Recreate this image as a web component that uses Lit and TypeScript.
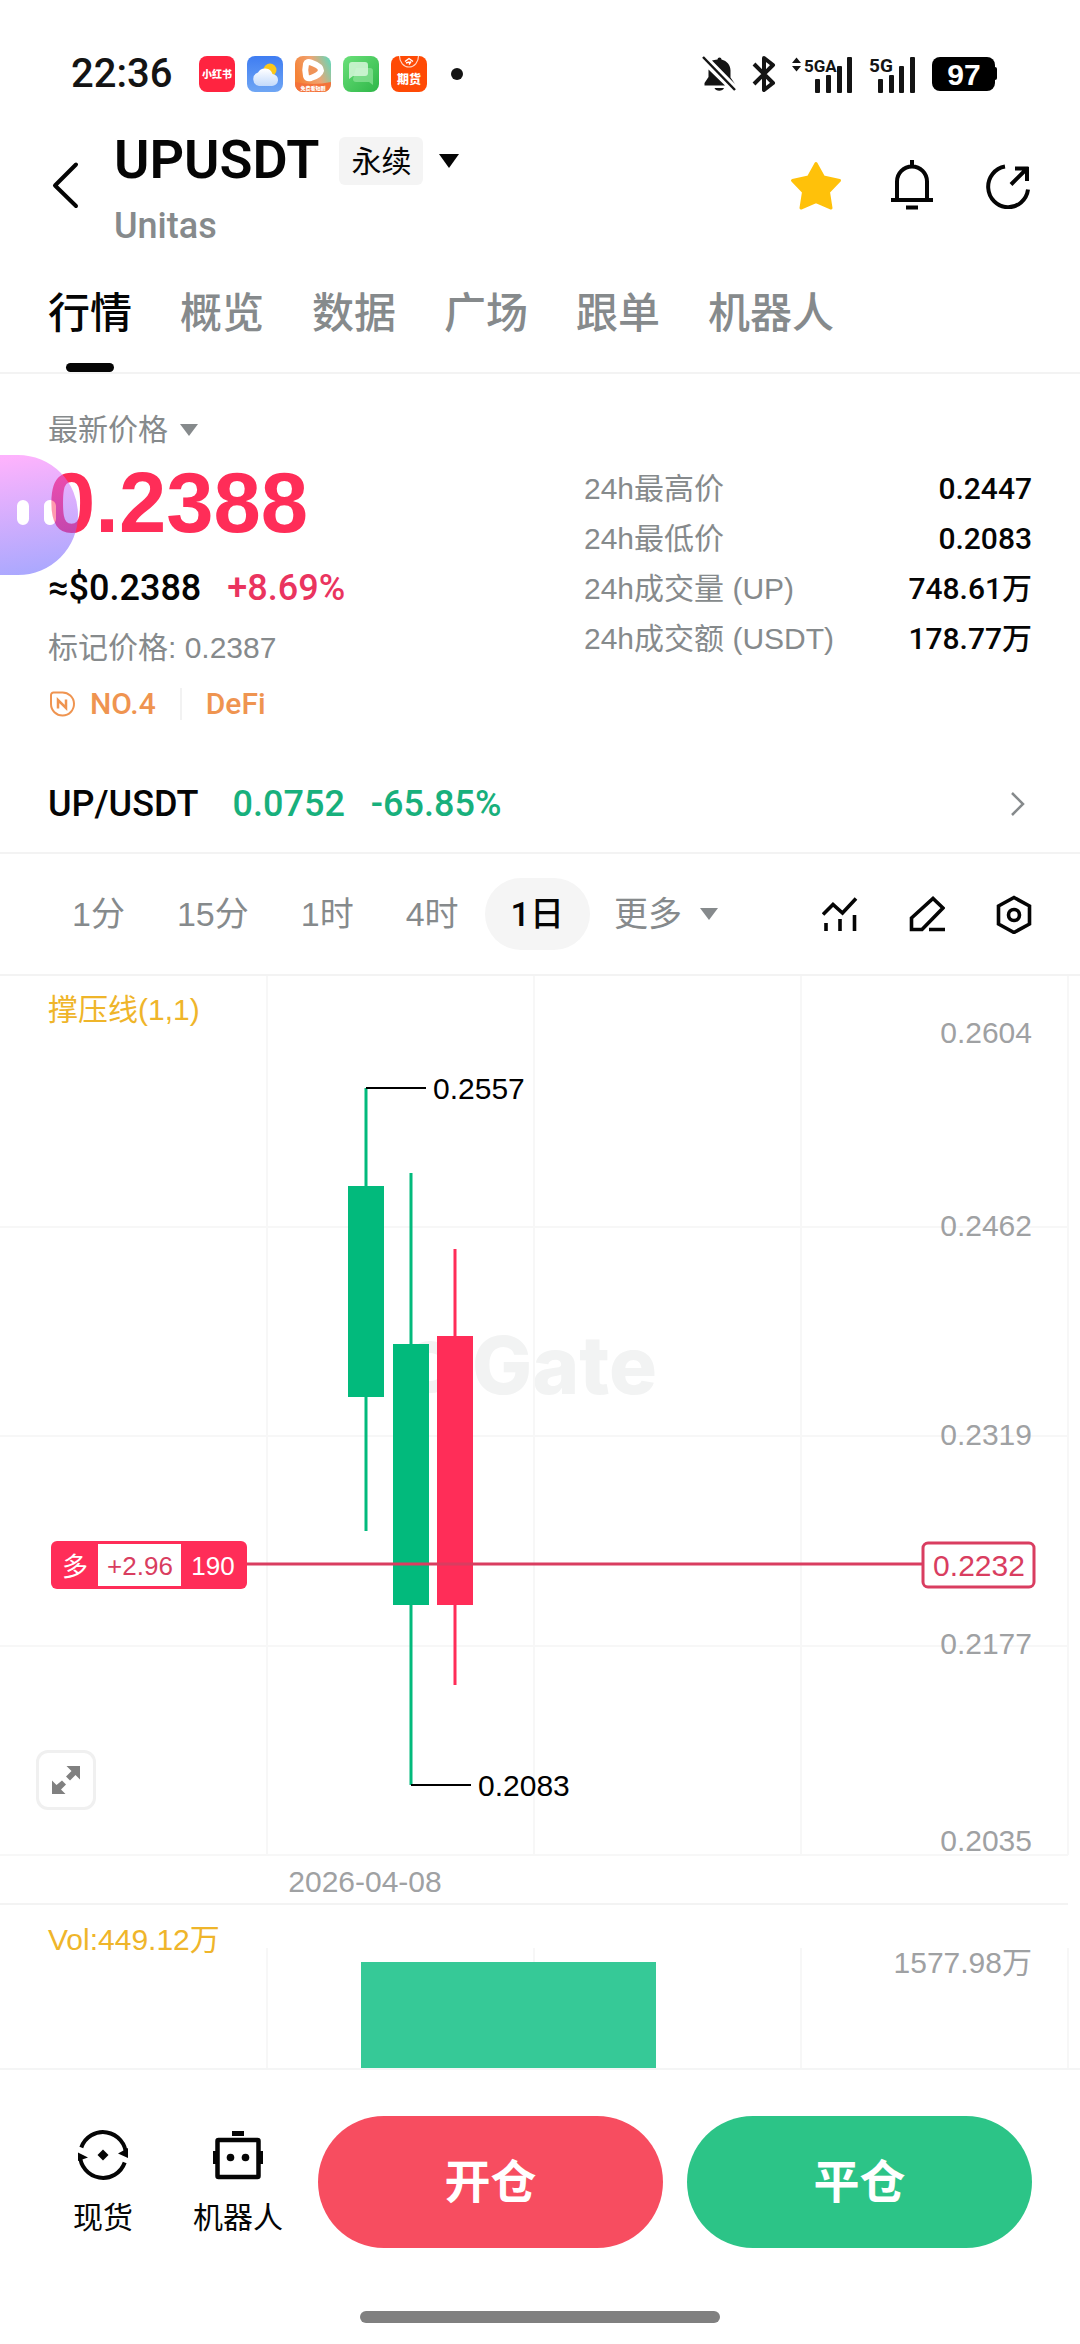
import { LitElement, html, svg, css } from "lit";
import { customElement, state } from "lit/decorators.js";

const TABS = ["行情", "概览", "数据", "广场", "跟单", "机器人"];
const INTERVALS = ["1分", "15分", "1时", "4时", "1日"];
const STATS = [
  ["24h最高价", "0.2447"],
  ["24h最低价", "0.2083"],
  ["24h成交量 (UP)", "748.61万"],
  ["24h成交额 (USDT)", "178.77万"],
];

const UP = "#02ba7c";
const DOWN = "#ff2d58";

interface Candle {
  x: number;
  high: number;
  top: number;
  bottom: number;
  low: number;
  color: string;
}

// Candle geometry in chart units.
const CANDLES: Candle[] = [
  { x: 366, high: 112, top: 210, bottom: 421, low: 555, color: UP },
  { x: 411, high: 197, top: 368, bottom: 629, low: 809, color: UP },
  { x: 455, high: 273, top: 360, bottom: 629, low: 709, color: DOWN },
];
const GRID_X = [267, 534, 801, 1068];
const GRID_Y = [251, 460, 670, 879];
const AXIS: [string, number][] = [
  ["0.2604", 67],
  ["0.2462", 260],
  ["0.2319", 469],
  ["0.2177", 678],
  ["0.2035", 875],
];

@customElement("status-bar")
export class StatusBar extends LitElement {
  static styles = css`
    :host {
      display: flex;
      align-items: center;
      justify-content: space-between;
      padding: 48px 83px 0 71px;
      height: 52px;
      color: #141414;
    }
    .group {
      display: flex;
      align-items: center;
    }
    .time {
      font: 500 40px/52px Roboto, sans-serif;
      margin-right: 27px;
    }
    .apps {
      display: flex;
      gap: 12px;
    }
    .dot {
      width: 12px;
      height: 12px;
      border-radius: 50%;
      background: #141414;
      margin-left: 24px;
    }
    .right {
      gap: 16px;
    }
    svg {
      display: block;
    }
    .battery {
      font: 700 30px "Liberation Sans", sans-serif;
    }
    .tiny {
      font-family: "Noto Sans CJK SC", sans-serif;
      font-weight: 900;
    }
    .net {
      font-family: "Liberation Sans Narrow", Roboto, sans-serif;
      font-weight: 700;
    }
  `;

  render() {
    return html`
      <div class="group">
        <span class="time">22:36</span>
        <div class="apps">
          <svg width="36" height="36" viewBox="0 0 36 36">
            <rect width="36" height="36" rx="8" fill="#ff2440" />
            <text class="tiny" x="18" y="22" font-size="10" fill="#fff" text-anchor="middle">小红书</text>
          </svg>
          <svg width="36" height="36" viewBox="0 0 36 36">
            <defs>
              <linearGradient id="sky" x1="0" y1="0" x2="0" y2="1">
                <stop offset="0" stop-color="#3f7df2" />
                <stop offset="1" stop-color="#6fa6f4" />
              </linearGradient>
              <linearGradient id="cloud" x1="0" y1="0" x2="0" y2="1">
                <stop offset="0" stop-color="#fff" />
                <stop offset="1" stop-color="#c3dafb" />
              </linearGradient>
            </defs>
            <rect width="36" height="36" rx="8" fill="url(#sky)" />
            <circle cx="23" cy="14" r="6.5" fill="#fcc818" />
            <path d="M12 30a7 7 0 0 1-1-13.500a8 8 0 0 1 14.500 1.500a6 6 0 0 1-1 12z" fill="url(#cloud)" />
          </svg>
          <svg width="36" height="36" viewBox="0 0 36 36">
            <defs>
              <linearGradient id="play" x1="0" y1="0.4" x2="1" y2="0">
                <stop offset="0" stop-color="#f58338" />
                <stop offset="0.5" stop-color="#f0a472" />
                <stop offset="1" stop-color="#55dcc0" />
              </linearGradient>
            </defs>
            <rect width="36" height="36" rx="8" fill="url(#play)" />
            <path d="M0 26Q18 30 36 26V28a8 8 0 0 1-8 8H8a8 8 0 0 1-8-8z" fill="#f4723a" />
            <path
              d="M11 8Q12 5 16 6.500Q26 10 26 14.500Q25 19 16 22Q12 23 11 20Q9.500 14 11 8z"
              fill="#ef9358"
              stroke="#fff"
              stroke-width="6"
            />
            <text class="tiny" x="18" y="34" font-size="5" fill="#fff" text-anchor="middle">免费看短剧</text>
          </svg>
          <svg width="36" height="36" viewBox="0 0 36 36">
            <defs>
              <linearGradient id="chat" x1="0" y1="0" x2="1" y2="1">
                <stop offset="0" stop-color="#6ae079" />
                <stop offset="1" stop-color="#2eb648" />
              </linearGradient>
            </defs>
            <rect width="36" height="36" rx="8" fill="url(#chat)" />
            <path d="M13 12h14a3 3 0 0 1 3 3v14l-4-3H13a3 3 0 0 1-3-3z" fill="#8ee49a" opacity="0.7" />
            <path d="M9 6h13a3 3 0 0 1 3 3v8a3 3 0 0 1-3 3H10l-4 3V9a3 3 0 0 1 3-3z" fill="#d6f7d9" opacity="0.85" />
          </svg>
          <svg width="36" height="36" viewBox="0 0 36 36">
            <rect width="36" height="36" rx="8" fill="#ff4a05" />
            <path d="M8.500 0a9.500 11 0 0 0 19 0" fill="none" stroke="#ffd5c4" stroke-width="1.200" />
            <path d="M14 5.500l4-3 4 3M15 7l3-1 1 2M18 8.500l2-3" fill="none" stroke="#fff" stroke-width="1.400" />
            <text class="tiny" x="18" y="28" font-size="12" fill="#fff" text-anchor="middle">期货</text>
          </svg>
        </div>
        <span class="dot"></span>
      </div>
      <div class="group right">
        <svg width="34" height="36" viewBox="0 0 34 36" fill="#141414">
          <path d="M17.500 1.500a2 2 0 0 1 2 2c5.500 1.500 9 5.500 9 11v7l4.500 6.500L10 4.500C11.500 4 13 3.700 15.500 3.500a2 2 0 0 1 2-2z" />
          <path d="M6.500 13.500L23 29.500H2.500v-2.500l4-6z" />
          <path d="M12.500 32h9.500a5 4 0 0 1-9.500 0z" />
          <path d="M1 1L33 34" stroke="#141414" stroke-width="2.500" />
        </svg>
        <svg width="24" height="36" viewBox="0 0 24 36" fill="none" stroke="#141414" stroke-width="4" stroke-linejoin="round">
          <path d="M2 8L21 27L12 34V2L21 9L2 28" />
        </svg>
        <svg width="61" height="42" viewBox="0 -4 61 42" fill="#141414">
          <path d="M0 6l4.500-5.500L9 6zM0 9h9l-4.500 5.500z" />
          <text class="net" x="12" y="15" font-size="17">5GA</text>
          <rect x="23" y="22" width="5" height="14" rx="1" />
          <rect x="34" y="18" width="5" height="18" rx="1" />
          <rect x="45" y="9" width="5" height="27" rx="1" />
          <rect x="55" y="0" width="5" height="36" rx="1" />
        </svg>
        <svg width="47" height="42" viewBox="0 -4 47 42" fill="#141414">
          <text class="net" x="0" y="15" font-size="19">5G</text>
          <rect x="9" y="22" width="5" height="14" rx="1" />
          <rect x="20" y="18" width="5" height="18" rx="1" />
          <rect x="30" y="9" width="5" height="27" rx="1" />
          <rect x="41" y="0" width="5" height="36" rx="1" />
        </svg>
        <svg width="65" height="34" viewBox="0 0 65 34">
          <rect width="63" height="34" rx="8" />
          <rect x="60" y="10" width="5" height="13" rx="2" />
          <text class="battery" x="32" y="28" fill="#fff" text-anchor="middle">97</text>
        </svg>
      </div>
    `;
  }
}

@customElement("price-chart")
export class PriceChart extends LitElement {
  static styles = css`
    :host {
      display: block;
      position: relative;
    }
    svg {
      display: block;
      width: 100%;
      height: auto;
    }
    .label {
      font: 400 30px "Liberation Sans", "Noto Sans CJK SC", sans-serif;
    }
    .small {
      font: 400 26px "Liberation Sans", "Noto Sans CJK SC", sans-serif;
    }
    .mark {
      font: 800 80px Inter, sans-serif;
    }
    .expand {
      position: absolute;
      left: 36px;
      bottom: 95px;
      width: 60px;
      height: 60px;
      padding: 0;
      border: 3px solid #f0f0f0;
      border-radius: 12px;
      background: #fff;
      display: grid;
      place-items: center;
    }
    .expand svg {
      width: 28px;
      height: 28px;
    }
  `;

  render() {
    return html`
      <svg viewBox="0 0 1080 929" role="img" aria-label="UPUSDT 1日 K线">
        <g fill="#f2f3f3">
          <circle cx="430" cy="391" r="20" fill="none" stroke="#f2f3f3" stroke-width="12" />
          <text class="mark" x="472" y="418">Gate</text>
        </g>
        <g stroke="#f7f7f7" stroke-width="2">
          ${GRID_X.map((x) => svg`<line x1=${x} y1="0" x2=${x} y2="879" />`)}
          ${GRID_Y.map((y) => svg`<line x1="0" y1=${y} x2="1068" y2=${y} />`)}
          <line x1="0" y1="928" x2="1068" y2="928" stroke="#f3f3f3" />
        </g>
        ${CANDLES.map(
          (c) => svg`
            <line x1=${c.x} y1=${c.high} x2=${c.x} y2=${c.low} stroke=${c.color} stroke-width="3" />
            <rect x=${c.x - 18} y=${c.top} width="36" height=${c.bottom - c.top} fill=${c.color} />`
        )}
        <g stroke="#000" stroke-width="2">
          <line x1="366" y1="112" x2="426" y2="112" />
          <line x1="411" y1="809" x2="471" y2="809" />
        </g>
        <text class="label" x="433" y="123">0.2557</text>
        <text class="label" x="478" y="820">0.2083</text>
        <g fill="#9fa1a3">
          ${AXIS.map(([t, y]) => svg`<text class="label" x="1032" y=${y} text-anchor="end">${t}</text>`)}
          <text class="label" x="365" y="916" text-anchor="middle">2026-04-08</text>
        </g>
        <text class="label" x="48" y="44" fill="#efb52a">撑压线(1,1)</text>

        <line x1="247" y1="588" x2="922" y2="588" stroke="#d93d60" stroke-width="3" />
        <rect x="51" y="565" width="196" height="48" rx="6" fill="#ff2d58" />
        <rect x="98" y="568" width="83" height="42" fill="#fff" />
        <text class="small" x="75" y="600" fill="#fff" text-anchor="middle">多</text>
        <text class="small" x="140" y="599" fill="#d93d60" text-anchor="middle">+2.96</text>
        <text class="small" x="213" y="599" fill="#fff" text-anchor="middle">190</text>
        <rect x="923" y="567" width="111" height="44" rx="5" fill="#fff" stroke="#d93d60" stroke-width="3" />
        <text class="label" x="979" y="600" fill="#d93d60" text-anchor="middle">0.2232</text>
      </svg>
      <button class="expand" aria-label="全屏">
        <svg viewBox="0 0 28 28" fill="#808080">
          <path d="M14.500 0H28v13.500l-4.500-4.500-5.500 5.500-4-4 5.500-5.500z" />
          <path d="M0 14.500l4.500 4.500 5.500-4.500 4 4-5 5 4.500 4.500H0z" />
        </svg>
      </button>
    `;
  }
}

@customElement("volume-chart")
export class VolumeChart extends LitElement {
  static styles = css`
    :host {
      display: block;
      border-bottom: 2px solid #f4f5f5;
    }
    svg {
      display: block;
      width: 100%;
      height: auto;
    }
    .label {
      font: 400 30px "Liberation Sans", "Noto Sans CJK SC", sans-serif;
    }
  `;

  render() {
    return html`
      <svg viewBox="0 0 1080 163" role="img" aria-label="成交量">
        <g stroke="#f7f7f7" stroke-width="2">
          ${GRID_X.map((x) => svg`<line x1=${x} y1="43" x2=${x} y2="163" />`)}
        </g>
        <rect x="361" y="57" width="295" height="106" fill="#36c997" />
        <text class="label" x="48" y="45" fill="#efb52a">Vol:449.12万</text>
        <text class="label" x="1032" y="68" fill="#9fa1a3" text-anchor="end">1577.98万</text>
      </svg>
    `;
  }
}

@customElement("app-root")
export class AppRoot extends LitElement {
  @state() private tab = "行情";
  @state() private interval = "1日";

  static styles = css`
    :host {
      display: block;
      position: relative;
      background: #fff;
      color: #050505;
      font: 400 30px/40px "Liberation Sans", "Noto Sans CJK SC", sans-serif;
    }
    button {
      border: 0;
      margin: 0;
      padding: 0;
      background: none;
      color: inherit;
      font: inherit;
      cursor: pointer;
    }
    a {
      color: inherit;
      text-decoration: none;
    }
    svg {
      display: block;
    }
    .medium {
      font-family: Roboto, "Noto Sans CJK SC", sans-serif;
      font-weight: 500;
    }
    .gray {
      color: #868a8c;
    }
    .header {
      display: flex;
      align-items: center;
      margin-top: 24px;
      padding: 0 48px;
      height: 122px;
    }
    .names {
      flex: 1;
      padding: 14px 0 0 32px;
    }
    .title-row {
      display: flex;
      align-items: center;
      height: 48px;
      gap: 16px;
    }
    .title {
      margin: 0;
      font: 600 54px/46px Roboto, sans-serif;
      height: 48px;
    }
    .kind {
      margin-left: 4px;
      padding: 0 12px;
      line-height: 50px;
      height: 48px;
      border-radius: 6px;
      background: #f4f4f4;
    }
    .sub {
      margin: 20px 0 0;
      font-size: 36px;
      line-height: 42px;
    }
    .actions {
      display: flex;
      gap: 48px;
    }
    .tabs {
      display: flex;
      gap: 48px;
      padding: 38px 48px 0;
      border-bottom: 2px solid #f3f3f3;
    }
    .tab {
      display: flex;
      flex-direction: column;
      align-items: center;
      font-size: 42px;
      line-height: 60px;
      font-weight: 500;
      color: #868a8c;
    }
    .tab::after {
      content: "";
      width: 48px;
      height: 9px;
      margin-top: 19px;
      border-radius: 5px;
    }
    .tab.on {
      color: #050505;
    }
    .tab.on::after {
      background: #050505;
    }
    .quote {
      display: grid;
      grid-template-columns: 1fr 448px;
      padding: 36px 48px;
    }
    .pick {
      display: flex;
      align-items: center;
      gap: 12px;
    }
    .price {
      margin-top: 3px;
      font-size: 85px;
      font-weight: 700;
      line-height: 100px;
      color: #ff2d58;
    }
    .usd {
      display: flex;
      gap: 26px;
      margin-top: 13px;
      font-size: 36px;
      line-height: 44px;
    }
    .red {
      color: #ea345f;
    }
    .index {
      margin-top: 18px;
    }
    .tags {
      display: flex;
      align-items: center;
      margin-top: 20px;
      line-height: 32px;
      color: #ef9450;
    }
    .rank {
      padding: 0 24px 0 14px;
      border-right: 2px solid #f2f2f2;
    }
    .sector {
      padding-left: 24px;
    }
    .stats {
      margin: 54px 0 0;
      line-height: 50px;
    }
    .stat {
      display: flex;
      justify-content: space-between;
    }
    .stat dd {
      margin: 0;
    }
    .pair {
      display: flex;
      align-items: center;
      height: 96px;
      padding: 0 48px;
      border-bottom: 2px solid #f3f3f3;
      font-size: 36px;
    }
    .pair-name {
      margin-right: 34px;
    }
    .green {
      color: #18b07c;
      margin-right: 26px;
    }
    .chevron {
      margin-left: auto;
    }
    .toolbar {
      display: flex;
      align-items: center;
      height: 120px;
      padding: 0 48px 0 46px;
      border-bottom: 2px solid #f3f3f3;
      font-size: 34px;
    }
    .interval {
      padding: 0 26px;
      line-height: 72px;
      border-radius: 36px;
      color: #868a8c;
    }
    .interval.on {
      background: #f5f5f5;
      color: #050505;
    }
    .more {
      gap: 18px;
      margin-left: 24px;
    }
    .tools {
      display: flex;
      gap: 51px;
      margin-left: auto;
    }
    .footer {
      display: grid;
      grid-template-columns: 110px 160px 1fr 24px 1fr;
      align-items: center;
      padding: 46px 48px 0;
    }
    .link {
      display: flex;
      flex-direction: column;
      align-items: center;
      gap: 18px;
      font-size: 30px;
      line-height: 36px;
    }
    .trade {
      height: 132px;
      border-radius: 66px;
      color: #fff;
      font-size: 46px;
      font-weight: 700;
    }
    .open {
      background: #f74d60;
    }
    .close {
      grid-column: 5;
      background: #2cc487;
    }
    .home {
      width: 360px;
      height: 12px;
      margin: 63px auto 0;
      border-radius: 6px;
      background: #808080;
    }
    .assistant {
      position: absolute;
      left: 0;
      top: 455px;
    }
  `;

  private caret(color: string, w = 18, h = 12) {
    return html`<svg width=${w} height=${h} viewBox="0 0 18 12" preserveAspectRatio="none">
      <path d="M0 0h18L9 12z" fill=${color} />
    </svg>`;
  }

  render() {
    return html`
      <status-bar></status-bar>
      <header class="header">
        <button aria-label="返回">
          <svg width="34" height="48" viewBox="0 0 34 48" fill="none" stroke="#050505" stroke-width="4" stroke-linecap="round" stroke-linejoin="round">
            <path d="M28 3.500L7 24.500L28 45" />
          </svg>
        </button>
        <div class="names">
          <div class="title-row">
            <h1 class="title">UPUSDT</h1>
            <span class="kind">永续</span>
            <button aria-label="切换合约">${this.caret("#050505", 20, 14)}</button>
          </div>
          <p class="sub gray medium">Unitas</p>
        </div>
        <div class="actions">
          <button aria-label="收藏">
            <svg width="48" height="48" viewBox="0 0 48 48" overflow="visible">
              <path
                d="M24 2.500L31.500 16L47.500 19.500L36.500 31L39 47L24 40.500L9 47L11.500 31L0.500 19.500L16.500 16z"
                fill="#ffc10a"
                stroke="#ffc10a"
                stroke-width="3"
                stroke-linejoin="round"
              />
            </svg>
          </button>
          <button aria-label="提醒">
            <svg width="48" height="50" viewBox="0 0 48 50" fill="none" stroke="#050505" stroke-width="4">
              <path d="M24 0v6M9 39V21.500a15 15 0 0 1 30 0V39M3 40h42M18 47.500h12" />
            </svg>
          </button>
          <button aria-label="分享">
            <svg width="48" height="48" viewBox="0 0 48 48" fill="none" stroke="#050505" stroke-width="4">
              <path d="M21 5.500A20 20.500 0 1 0 44 28.500" />
              <path d="M27 23.500L42 8.500M31 7.500h13.500M43 6v14" />
            </svg>
          </button>
        </div>
      </header>

      <nav class="tabs" role="tablist">
        ${TABS.map(
          (t) => html`<button
            role="tab"
            aria-selected=${t === this.tab}
            class="tab ${t === this.tab ? "on" : ""}"
            @click=${() => (this.tab = t)}
          >${t}</button>`
        )}
      </nav>

      <section class="quote">
        <div>
          <button class="pick gray">最新价格${this.caret("#868a8c")}</button>
          <div class="price">0.2388</div>
          <div class="usd medium"><span>≈$0.2388</span><span class="red">+8.69%</span></div>
          <div class="index gray">标记价格: 0.2387</div>
          <div class="tags">
            <svg width="28" height="28" viewBox="0 0 28 28" fill="none" stroke="#ef9450" stroke-width="2">
              <path d="M3 5a2.500 2.500 0 0 1 2.500-2.500H14A11.500 11.500 0 1 1 3 14z" />
              <path d="M10 18.500V10l8 8V9.500" stroke-width="2.500" />
            </svg>
            <a class="rank medium" href="#rank">NO.4</a>
            <a class="sector medium" href="#defi">DeFi</a>
          </div>
        </div>
        <dl class="stats">
          ${STATS.map(
            ([k, v]) => html`<div class="stat"><dt class="gray">${k}</dt><dd class="medium">${v}</dd></div>`
          )}
        </dl>
      </section>

      <a class="pair" href="#spot-pair">
        <span class="pair-name medium">UP/USDT</span>
        <span class="green medium">0.0752</span>
        <span class="green medium">-65.85%</span>
        <svg class="chevron" width="22" height="26" viewBox="0 0 22 26" fill="none" stroke="#868a8c" stroke-width="2.500">
          <path d="M2 2l11 11L2 24" />
        </svg>
      </a>

      <div class="toolbar">
        ${INTERVALS.map(
          (i) => html`<button
            aria-pressed=${i === this.interval}
            class="interval ${i === this.interval ? "on medium" : ""}"
            @click=${() => (this.interval = i)}
          >${i}</button>`
        )}
        <button class="pick more gray">更多${this.caret("#868a8c")}</button>
        <div class="tools">
          <button aria-label="指标">
            <svg width="36" height="40" viewBox="0 -2 36 40" fill="none" stroke="#050505" stroke-width="3.600">
              <path d="M1 18.500L11 8.500L20.500 17L34 2.500" />
              <path d="M4 27v8M18 23v12M32.500 19v16" />
            </svg>
          </button>
          <button aria-label="画线">
            <svg width="36" height="40" viewBox="0 -2 36 40" fill="none" stroke="#050505" stroke-width="3.600">
              <path d="M2.500 22L24 2.500L34 12L13 33.500H2.500zM20 33.500h16" />
            </svg>
          </button>
          <button aria-label="设置">
            <svg width="36" height="40" viewBox="0 -1 36 40" fill="none" stroke="#050505" stroke-width="3.600">
              <path d="M18 2.500L33.500 11V29L18 37.500L2.500 29V11z" />
              <circle cx="18" cy="20" r="5.500" />
            </svg>
          </button>
        </div>
      </div>

      <price-chart></price-chart>
      <volume-chart></volume-chart>

      <footer class="footer">
        <a class="link" href="#spot">
          <svg width="54" height="54" viewBox="0 0 54 54" fill="none" stroke="#050505" stroke-width="4">
            <path d="M5.300 19.500A23 23 0 0 1 50 27M4 27A23 23 0 0 0 48.700 34.500" />
            <path d="M42 25.500L52 20V30zM12 29.500L2 24.500V33z" fill="#050505" stroke="none" />
            <path d="M27 21.500L32.500 27L27 32.500L21.500 27z" fill="#050505" stroke="none" />
          </svg>
          现货
        </a>
        <a class="link" href="#bots">
          <svg width="54" height="54" viewBox="0 0 54 54" fill="#050505">
            <rect x="6.500" y="12" width="41" height="37" rx="1" fill="none" stroke="#050505" stroke-width="4.500" />
            <rect x="21" y="3" width="12" height="5" />
            <rect x="2" y="23" width="4" height="13" />
            <rect x="48" y="23" width="4" height="13" />
            <circle cx="19.500" cy="29.500" r="3.800" />
            <circle cx="34.500" cy="29.500" r="3.800" />
          </svg>
          机器人
        </a>
        <button class="trade open">开仓</button>
        <button class="trade close">平仓</button>
      </footer>
      <div class="home"></div>

      <button class="assistant" aria-label="助手">
        <svg width="78" height="120" viewBox="0 0 78 120">
          <defs>
            <linearGradient id="glow" x1="0.400" y1="0" x2="0.500" y2="1">
              <stop offset="0" stop-color="#fb6dfb" />
              <stop offset="1" stop-color="#5a58fd" />
            </linearGradient>
          </defs>
          <path
            fill-rule="evenodd"
            fill="url(#glow)"
            fill-opacity="0.520"
            d="M0 0H18A60 60 0 0 1 18 120H0zM17 51V64a6 6 0 0 0 12 0V51a6 6 0 0 0-12 0zM44 51V64a6 6 0 0 0 12 0V51a6 6 0 0 0-12 0z"
          />
          <rect x="44" y="45" width="12" height="25" rx="6" fill="#fff" fill-opacity="0.520" />
        </svg>
      </button>
    `;
  }
}
